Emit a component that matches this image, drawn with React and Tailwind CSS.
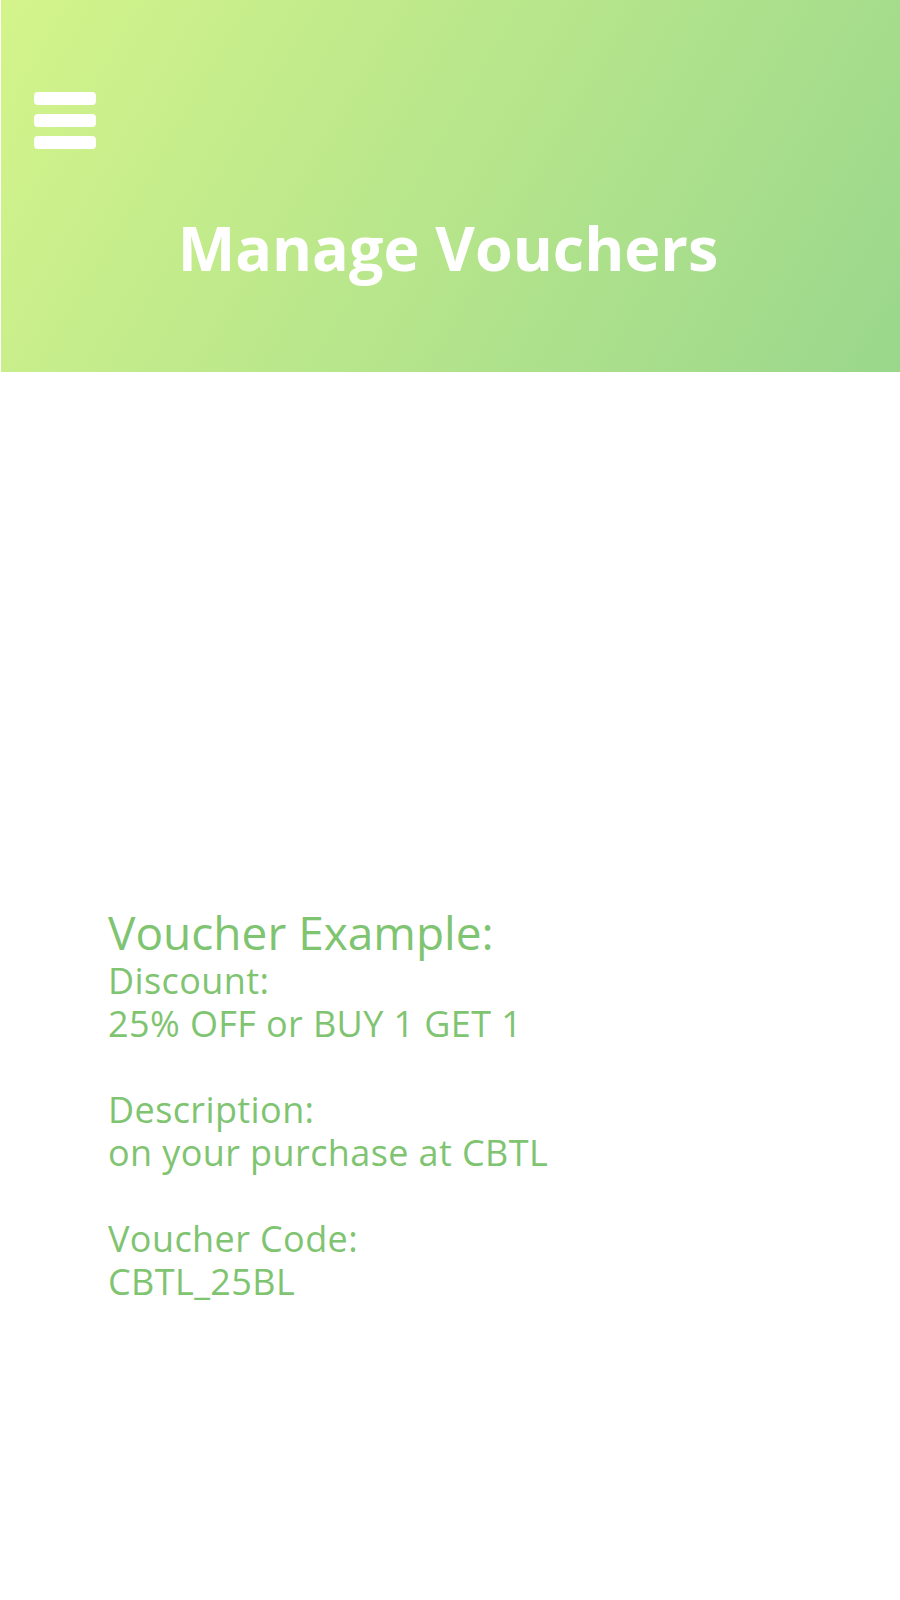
export default function App() {
  return (
    <div className="w-[900px] min-h-[1600px] bg-white font-['Open_Sans',sans-serif]">
      {/* Header */}
      <header className="ml-px h-[372px] bg-linear-[120deg] from-[#d4f48b] to-[#9ad78c] pt-[92px]">
        <div className="ml-[33px] flex w-[62px] flex-col gap-[9px]">
          <span className="h-[13px] rounded-[4px] bg-white" />
          <span className="h-[13px] rounded-[4px] bg-white" />
          <span className="h-[13px] rounded-[4px] bg-white" />
        </div>
        <h1 className="mt-[68px] pr-[5px] text-center text-[61px] font-bold leading-none text-white">
          Manage Vouchers
        </h1>
      </header>

      {/* Voucher example */}
      <section className="pl-[108px] pt-[535px] text-[#7fc471]">
        <h2 className="text-[46px] leading-[50px]">Voucher Example:</h2>
        <div className="mt-[2px] text-[36px] leading-[43px] tracking-[0.4px]">
          <p>Discount:</p>
          <p>25% OFF or BUY 1 GET 1</p>
          <p className="mt-[43px]">Description:</p>
          <p>on your purchase at CBTL</p>
          <p className="mt-[43px]">Voucher Code:</p>
          <p>CBTL_25BL</p>
        </div>
      </section>
    </div>
  )
}
